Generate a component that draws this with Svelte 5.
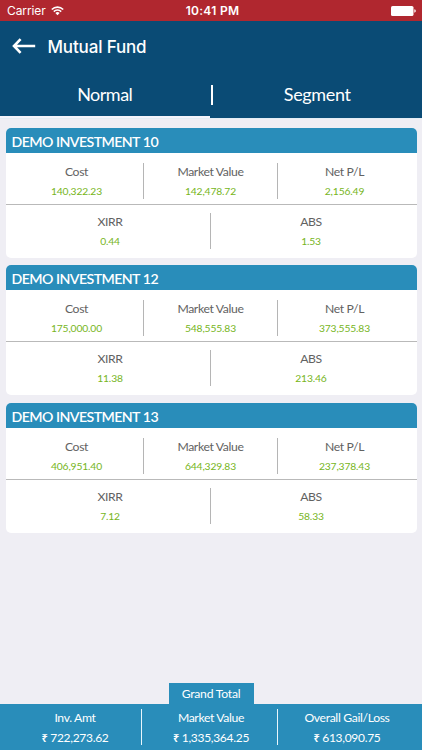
<script>
  const funds = [
    { name: 'DEMO INVESTMENT 10', cost: '140,322.23', value: '142,478.72', net: '2,156.49', xirr: '0.44', abs: '1.53' },
    { name: 'DEMO INVESTMENT 12', cost: '175,000.00', value: '548,555.83', net: '373,555.83', xirr: '11.38', abs: '213.46' },
    { name: 'DEMO INVESTMENT 13', cost: '406,951.40', value: '644,329.83', net: '237,378.43', xirr: '7.12', abs: '58.33' }
  ];
  const totals = [
    ['Inv. Amt', '722,273.62'],
    ['Market Value', '1,335,364.25'],
    ['Overall Gail/Loss', '613,090.75']
  ];
</script>

{#snippet cell(label, amount)}
  <div class="cell">
    <span class="label">{label}</span>
    <span class="amount">{amount}</span>
  </div>
{/snippet}

<div class="screen">
  <div class="status">
    <div class="carrier">
      <span>Carrier</span>
      <svg width="13" height="10" viewBox="0 0 13 10" fill="none" stroke="#fff" stroke-width="1.6">
        <path d="M.8 3.5a8.1 8.1 0 0 1 11.4 0M2.8 5.6a5.2 5.2 0 0 1 7.4 0" />
        <path d="M6.5 9.2 4.4 7.1a3 3 0 0 1 4.2 0z" fill="#fff" stroke="none" />
      </svg>
    </div>
    <span class="time">10:41 PM</span>
    <svg class="battery" width="25" height="10" viewBox="0 0 25 10" fill="#fff">
      <rect width="22.5" height="10" rx="1.6" />
      <path d="M23.3 3.3q1.5.3 1.5 1.7t-1.5 1.7z" />
    </svg>
  </div>

  <header>
    <svg width="24" height="16" viewBox="0 0 24 16" fill="none" stroke="#fff" stroke-width="2.6">
      <path d="M23.2 8H2M8.6 1.2 2 8l6.6 6.8" />
    </svg>
    <h1>Mutual Fund</h1>
  </header>

  <nav>
    <div class="tab active">Normal</div>
    <i></i>
    <div class="tab">Segment</div>
  </nav>

  <main>
    {#each funds as fund}
      <section>
        <h2>{fund.name}</h2>
        <div class="row three">
          {@render cell('Cost', fund.cost)}
          {@render cell('Market Value', fund.value)}
          {@render cell('Net P/L', fund.net)}
        </div>
        <div class="row two">
          {@render cell('XIRR', fund.xirr)}
          {@render cell('ABS', fund.abs)}
        </div>
      </section>
    {/each}
  </main>

  <footer>
    <div class="grand">Grand Total</div>
    <div class="totals">
      {#each totals as [label, amount]}
        <div class="total">
          <span>{label}</span>
          <span class="sum"><b>₹</b> {amount}</span>
        </div>
      {/each}
    </div>
  </footer>
</div>

<style>
  :global(body) { margin: 0; }
  .screen {
    width: 422px;
    height: 750px;
    display: flex;
    flex-direction: column;
    overflow: hidden;
    background: #efeef4;
    color: #fff;
    font-family: Lato, "Noto Sans", sans-serif;
    white-space: nowrap;
  }
  .status {
    height: 21px;
    flex: none;
    box-sizing: border-box;
    padding: 0 6px 0 7px;
    display: grid;
    grid-template-columns: 1fr auto 1fr;
    align-items: center;
    background: #b0272f;
    font: 12px/22px Inter, sans-serif;
  }
  .carrier { display: flex; align-items: center; gap: 5px; letter-spacing: -0.1px; }
  .time { font-weight: 600; letter-spacing: 0.3px; padding-left: 2px; }
  .battery { justify-self: end; }
  header {
    height: 51px;
    flex: none;
    display: flex;
    align-items: center;
    gap: 11.5px;
    padding-left: 12px;
    background: #0a4b75;
  }
  header svg { margin-top: -2px; }
  h1 { margin: 0; font: 500 17px/24px Inter, sans-serif; letter-spacing: -0.15px; }
  nav {
    height: 46px;
    flex: none;
    display: flex;
    align-items: flex-start;
    background: #0a4b75;
    border-bottom: 1px solid #e4edf5;
    font-size: 18px;
    line-height: 44px;
    letter-spacing: -0.5px;
  }
  .tab { flex: 1; height: 46px; box-sizing: border-box; text-align: center; }
  .tab:last-child { letter-spacing: -0.35px; }
  .active { border-bottom: 2px solid #f4f4fb; }
  nav i { width: 2px; height: 20px; margin: 13px 0 0 1px; background: #fff; }
  main {
    flex: 1;
    padding: 8.5px 5.5px 0;
    display: flex;
    flex-direction: column;
    gap: 7.5px;
  }
  section { height: 130px; border-radius: 5px; overflow: hidden; background: #fff; }
  h2 {
    height: 25px;
    margin: 0;
    padding-left: 6px;
    background: #298dba;
    font-size: 14.2px;
    line-height: 27px;
    font-weight: 600;
    letter-spacing: -0.62px;
    word-spacing: 0.5px;
  }
  .row { display: flex; padding: 10px 5px 0 4px; box-sizing: border-box; }
  .three { height: 52px; border-bottom: 1px solid #b9b9b9; }
  .two { padding-top: 8px; }
  .cell {
    flex: 1;
    height: 36px;
    display: flex;
    flex-direction: column;
    align-items: center;
    position: relative;
  }
  .cell + .cell::before, .total + .total::before {
    content: "";
    position: absolute;
    left: -0.5px;
    top: 0;
    width: 1px;
    height: 36px;
    background: #b5b5b5;
  }
  .label { color: #626262; font-size: 12.2px; line-height: 18px; letter-spacing: -0.35px; }
  .amount { color: #76b51b; font-size: 10.3px; line-height: 21px; letter-spacing: -0.15px; }
  footer { flex: none; display: flex; flex-direction: column; align-items: center; }
  .grand {
    width: 85px;
    height: 21px;
    background: #298dba;
    text-align: center;
    font-size: 12.2px;
    line-height: 22px;
    letter-spacing: -0.25px;
  }
  .totals {
    width: 408px;
    height: 46px;
    box-sizing: border-box;
    padding-top: 5px;
    display: flex;
    background: #298dba;
    box-shadow: -7px 0 #298dba, 7px 0 #298dba;
  }
  .total {
    flex: 1;
    position: relative;
    display: flex;
    flex-direction: column;
    align-items: center;
    font-size: 12.2px;
    line-height: 18px;
    letter-spacing: -0.35px;
  }
  .total + .total::before { left: -2.5px; background: #e8f6fc; }
  .sum { line-height: 22px; letter-spacing: -0.3px; font-size: 12px; }
  .sum b { font: 600 11px "Noto Sans", sans-serif; }
</style>
